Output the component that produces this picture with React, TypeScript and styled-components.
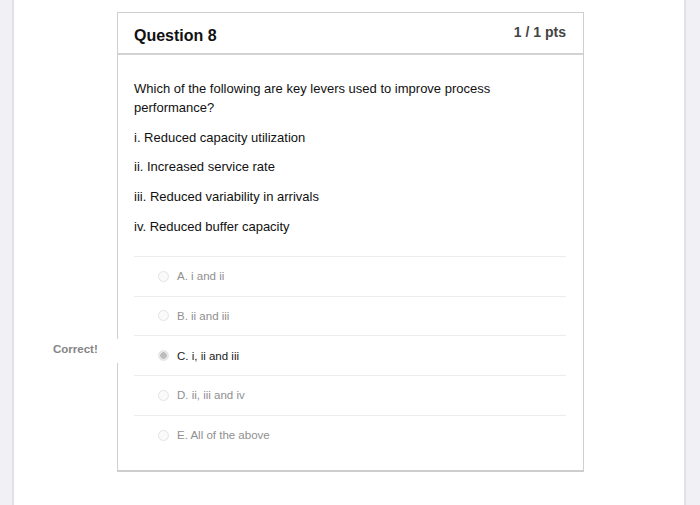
import styled, { createGlobalStyle } from "styled-components";

const GlobalStyle = createGlobalStyle`
  html, body {
    margin: 0;
    padding: 0;
    background: #ffffff;
  }
  body {
    font-family: "Liberation Sans", Arial, sans-serif;
  }
`

const Page = styled.div`
  display: flex;
  width: 700px;
  height: 505px;
  overflow: hidden;
`

const SideBand = styled.div<{ side: "left" | "right" }>`
  width: ${props => props.side === "left" ? "12px" : "14px"};
  flex-shrink: 0;
  background-color: #f0f0f5;
  border-${props => props.side === "left" ? "right" : "left"}: 2px solid #e1e1e6;
`

const Main = styled.div`
  flex: 1;
  padding: 12px 0 0 103px;
`

const Card = styled.div`
  width: 465px;
  border: 1px solid #cfcfcf;
  border-bottom: 2px solid #cdcdcd;
  background: #fff;
`

const Header = styled.div`
  display: flex;
  justify-content: space-between;
  height: 40px;
  padding: 0 17px 0 16px;
  border-bottom: 2px solid #d3d3d3;
`

const Title = styled.h2`
  margin: 0;
  padding-top: 13px;
  font-size: 16px;
  line-height: 20px;
  font-weight: bold;
  color: #111;
`

const Points = styled.span`
  padding-top: 10px;
  font-size: 14px;
  line-height: 18px;
  font-weight: bold;
  color: #444;
`

const Body = styled.div`
  padding: 24px 17px 15px 16px;
`

const Paragraph = styled.p`
  margin: 0 0 10.7px;
  font-size: 13px;
  line-height: 19px;
  color: #111;
`

const QuestionText = styled(Paragraph)`
  width: 370px;
`

const Answers = styled.div`
  margin-top: 20px;
`

const AnswerRow = styled.div`
  position: relative;
  display: flex;
  align-items: center;
  height: 38.75px;
  padding-left: 24px;
  border-top: 1px solid #ececec;
`

const Radio = styled.span<{ checked: boolean }>`
  width: 9px;
  height: 9px;
  border-radius: 50%;
  border: 1px solid #e4e4e4;
  background: ${props => props.checked
    ? "radial-gradient(circle, #bdbdbd 0 3px, #e9e9e9 3.5px)"
    : "#fafafa"};
  margin-right: 8px;
  flex-shrink: 0;
`

const AnswerText = styled.span<{ selected: boolean }>`
  font-size: 11.5px;
  color: ${props => props.selected ? "#1a1a1a" : "#8f8f8f"};
`

const CorrectFlag = styled.span`
  position: absolute;
  left: -98px;
  top: 3px;
  width: 70px;
  height: 24px;
  padding-left: 17px;
  background: #fff;
  font-size: 11.5px;
  line-height: 20px;
  font-weight: bold;
  color: #858585;
`

const answers = [
    { label: "A. i and ii", selected: false },
    { label: "B. ii and iii", selected: false },
    { label: "C. i, ii and iii", selected: true },
    { label: "D. ii, iii and iv", selected: false },
    { label: "E. All of the above", selected: false },
]

const App = () => {
    return <>
        <GlobalStyle/>
        <Page>
            <SideBand side="left"/>
            <Main>
                <Card>
                    <Header>
                        <Title>Question 8</Title>
                        <Points>1 / 1 pts</Points>
                    </Header>
                    <Body>
                        <QuestionText>
                            Which of the following are key levers used to improve process performance?
                        </QuestionText>
                        <Paragraph>i. Reduced capacity utilization</Paragraph>
                        <Paragraph>ii. Increased service rate</Paragraph>
                        <Paragraph>iii. Reduced variability in arrivals</Paragraph>
                        <Paragraph>iv. Reduced buffer capacity</Paragraph>
                        <Answers>
                            {answers.map(answer => (
                                <AnswerRow key={answer.label}>
                                    {answer.selected && <CorrectFlag>Correct!</CorrectFlag>}
                                    <Radio checked={answer.selected}/>
                                    <AnswerText selected={answer.selected}>{answer.label}</AnswerText>
                                </AnswerRow>
                            ))}
                        </Answers>
                    </Body>
                </Card>
            </Main>
            <SideBand side="right"/>
        </Page>
    </>
}

export default App;
